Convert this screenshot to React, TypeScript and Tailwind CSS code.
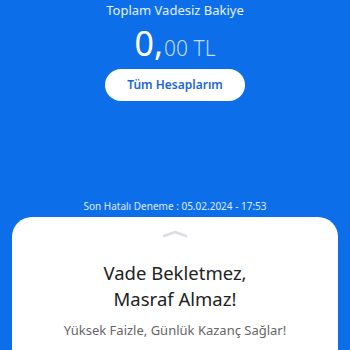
export default function App() {
  return (
    <div
      className="w-[350px] h-[350px] overflow-hidden bg-[#0c6fe9] flex flex-col items-center"
      style={{ fontFamily: '"Noto Sans", "Open Sans", sans-serif' }}
    >
      <div className="mt-[1px] text-[13px] leading-[18px] text-white/90">Toplam Vadesiz Bakiye</div>
      <div className="mt-[4px] flex items-baseline text-white">
        <span className="text-[34px] leading-[40px]">0,</span>
        <span className="text-[21px] leading-[24px] font-light text-white/75 ml-[1px]">00 TL</span>
      </div>
      <button className="mt-[6px] w-[140px] h-[32px] rounded-full bg-white text-[#1a66d6] text-[12px] font-semibold">
        Tüm Hesaplarım
      </button>
      <div className="mt-[98px] text-[10px] leading-[14px] text-white/85">
        Son Hatalı Deneme : 05.02.2024 - 17:53
      </div>
      <div className="mt-[4px] w-[326px] flex-1 bg-white rounded-t-[20px] flex flex-col items-center">
        <svg width="26" height="8" viewBox="0 0 26 8" className="mt-[13px]">
          <path d="M2 6 L13 2 L24 6" stroke="#dcdde6" strokeWidth="2.5" fill="none" strokeLinecap="round" strokeLinejoin="round" />
        </svg>
        <div className="mt-[22px] text-center text-[18.5px] leading-[26px] text-[#222]">
          Vade Bekletmez,
          <br />
          Masraf Almaz!
        </div>
        <div className="mt-[9px] text-[13px] text-[#666]">Yüksek Faizle, Günlük Kazanç Sağlar!</div>
      </div>
    </div>
  );
}
